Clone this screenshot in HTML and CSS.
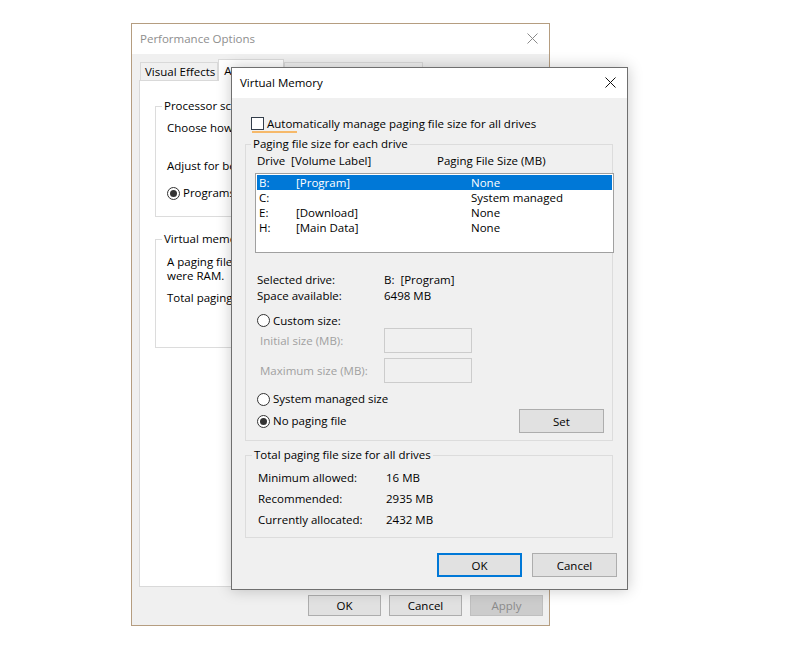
FILE: index.html
```html
<!DOCTYPE html>
<html lang="en">

<head>
    <meta charset="UTF-8">
    <meta name="viewport" content="width=device-width, initial-scale=1.0">
    <title>Virtual Memory</title>
    <link rel="stylesheet" href="styles.css">
</head>

<body>
    <div class="desktop">
        <!-- back window -->
        <div class="window perf">
            <div class="titlebar">
                <span class="title inactive">Performance Options</span>
                <svg class="close" width="11" height="11" viewBox="0 0 11 11">
                    <path d="M0.5 0.5 L10.5 10.5 M10.5 0.5 L0.5 10.5" stroke="#8a8a8a" stroke-width="1" fill="none" />
                </svg>
            </div>
            <div class="perf-body">
                <div class="tabs">
                    <div class="tab">Visual Effects</div>
                    <div class="tab active">Advanced</div>
                    <div class="tab dep">Data Execution Prevention</div>
                </div>
                <div class="tab-panel">
                    <fieldset class="group sched">
                        <legend>Processor scheduling</legend>
                        <p class="line">Choose how to allocate processor resources.</p>
                        <p class="line gap">Adjust for best performance of:</p>
                        <div class="radios">
                            <label class="radio-row"><span class="radio checked"></span>Programs</label>
                            <label class="radio-row"><span class="radio"></span>Background services</label>
                        </div>
                    </fieldset>
                    <fieldset class="group vmem">
                        <legend>Virtual memory</legend>
                        <p class="para">A paging file is an area on the hard disk that Windows uses as if it</p>
                        <p class="para">were RAM.</p>
                        <p class="line">Total paging file size for all drives: &nbsp; 2432 MB</p>
                        <div class="change-row"><button class="btn">Change...</button></div>
                    </fieldset>
                </div>
                <div class="perf-buttons">
                    <button class="btn">OK</button>
                    <button class="btn">Cancel</button>
                    <button class="btn" disabled>Apply</button>
                </div>
            </div>
        </div>

        <!-- front dialog -->
        <div class="window vm">
            <div class="titlebar">
                <span class="title">Virtual Memory</span>
                <svg class="close" width="11" height="11" viewBox="0 0 11 11">
                    <path d="M0.5 0.5 L10.5 10.5 M10.5 0.5 L0.5 10.5" stroke="#111" stroke-width="1" fill="none" />
                </svg>
            </div>
            <div class="vm-body">
                <div class="auto-row">
                    <span class="checkbox"></span>
                    <span>Automatically manage paging file size for all drives</span>
                    <span class="mark"></span>
                </div>

                <fieldset class="group drives">
                    <legend>Paging file size for each drive</legend>
                    <div class="list-head">
                        <span>Drive &nbsp;[Volume Label]</span>
                        <span>Paging File Size (MB)</span>
                    </div>
                    <div class="listbox">
                        <div class="item selected"><span>B:</span><span>[Program]</span><span>None</span></div>
                        <div class="item"><span>C:</span><span></span><span>System managed</span></div>
                        <div class="item"><span>E:</span><span>[Download]</span><span>None</span></div>
                        <div class="item"><span>H:</span><span>[Main Data]</span><span>None</span></div>
                    </div>

                    <div class="info">
                        <span>Selected drive:</span><span>B: &nbsp;[Program]</span>
                        <span>Space available:</span><span>6498 MB</span>
                    </div>

                    <label class="radio-row custom"><span class="radio"></span>Custom size:</label>
                    <div class="size-row first">
                        <span class="disabled-text">Initial size (MB):</span>
                        <input type="text" class="field" disabled>
                    </div>
                    <div class="size-row">
                        <span class="disabled-text">Maximum size (MB):</span>
                        <input type="text" class="field" disabled>
                    </div>
                    <label class="radio-row sys"><span class="radio"></span>System managed size</label>
                    <div class="set-row">
                        <label class="radio-row"><span class="radio checked"></span>No paging file</label>
                        <button class="btn set">Set</button>
                    </div>
                </fieldset>

                <fieldset class="group totals">
                    <legend>Total paging file size for all drives</legend>
                    <div class="total-grid">
                        <span>Minimum allowed:</span><span>16 MB</span>
                        <span>Recommended:</span><span>2935 MB</span>
                        <span>Currently allocated:</span><span>2432 MB</span>
                    </div>
                </fieldset>

                <div class="vm-buttons">
                    <button class="btn big default">OK</button>
                    <button class="btn big">Cancel</button>
                </div>
            </div>
        </div>
    </div>
</body>

</html>
```

FILE: styles.css
```css
* {
    box-sizing: border-box;
}

body {
    margin: 0;
    background-color: #ffffff;
    font-family: "Open Sans", "Noto Sans", sans-serif;
    font-size: 11.5px;
    color: #000;
}

.desktop {
    position: relative;
    width: 791px;
    height: 659px;
    overflow: hidden;
}

p {
    margin: 0;
}

.window {
    position: absolute;
    display: flex;
    flex-direction: column;
    background-color: #f0f0f0;
}

.perf {
    left: 131px;
    top: 23px;
    width: 419px;
    height: 603px;
    border: 1px solid #b59d80;
    z-index: 1;
}

.vm {
    left: 231px;
    top: 67px;
    width: 397px;
    height: 523px;
    border: 1px solid #6f6f6f;
    box-shadow: 0 0 14px rgba(0, 0, 0, 0.22);
    z-index: 2;
}

.titlebar {
    height: 30px;
    flex: none;
    background-color: #fff;
    display: flex;
    align-items: center;
    justify-content: space-between;
    padding: 0 11px 1px 8px;
}

.title {
    line-height: 16px;
}

.title.inactive {
    color: #8e8e8e;
}

/* buttons */
.btn {
    font-family: inherit;
    font-size: 11.5px;
    color: #000;
    background-color: #e1e1e1;
    border: 1px solid #adadad;
    padding: 0;
    height: 21px;
    width: 73px;
    cursor: pointer;
}

.btn:disabled {
    background-color: #cccccc;
    border-color: #bfbfbf;
    color: #8a8a8a;
}

.btn.big {
    height: 24px;
    width: 85px;
}

.btn.default {
    border: 2px solid #0078d7;
}

/* radios and checkbox */
.radio-row {
    display: flex;
    align-items: center;
    height: 16px;
    line-height: 16px;
}

.radio {
    width: 13px;
    height: 13px;
    border: 1px solid #333;
    border-radius: 50%;
    background-color: #fff;
    margin-right: 3px;
    position: relative;
    flex: none;
}

.radio.checked::after {
    content: "";
    position: absolute;
    left: 2px;
    top: 2px;
    width: 7px;
    height: 7px;
    border-radius: 50%;
    background-color: #333;
}

.checkbox {
    width: 13px;
    height: 13px;
    border: 1px solid #333d4a;
    background-color: #fff;
    margin-right: 3px;
    flex: none;
}

/* group boxes */
.group {
    margin: 0;
    border: 1px solid #dcdcdc;
    min-width: 0;
}

.group legend {
    padding: 0 2px;
    line-height: 16px;
}

/* performance options */
.perf-body {
    flex: 1;
    display: flex;
    flex-direction: column;
    padding: 5px 7px 0 7px;
}

.tabs {
    display: flex;
    align-items: flex-end;
    height: 21px;
    padding-left: 1px;
    position: relative;
    z-index: 1;
}

.tab {
    height: 18px;
    line-height: 17px;
    padding: 0 2px 0 4px;
    border: 1px solid #d9d9d9;
    border-bottom: none;
    background-color: #f0f0f0;
    white-space: nowrap;
}

.tab.active {
    height: 22px;
    margin-bottom: -1px;
    background-color: #fff;
    padding: 2px 6px 0 5px;
}

.tab.dep {
    font-size: 11px;
    padding: 0 1px;
}

.tab-panel {
    height: 507px;
    background-color: #fff;
    border: 1px solid #d9d9d9;
    padding: 17px 15px 0 15px;
}

.sched {
    padding: 6px 10px 15px 11px;
}

.sched legend,
.vmem legend {
    margin-left: -5px;
}

.line {
    line-height: 16px;
}

.line.gap {
    margin-top: 22px;
}

.radios {
    display: flex;
    gap: 40px;
    margin-top: 11px;
}

.vmem {
    margin-top: 14px;
    padding: 8px 10px 12px 11px;
}

.para {
    line-height: 14px;
    white-space: nowrap;
}

.vmem .line {
    margin-top: 7px;
}

.change-row {
    display: flex;
    justify-content: flex-end;
    margin-top: 6px;
}

.change-row .btn {
    width: 75px;
    height: 23px;
}

.perf-buttons {
    display: flex;
    justify-content: flex-end;
    gap: 8px;
    margin-top: 8px;
    margin-right: -1px;
}

/* virtual memory dialog */
.vm-body {
    flex: 1;
    padding: 0 14px 0 13px;
}

.auto-row {
    position: relative;
    display: flex;
    align-items: center;
    height: 16px;
    margin-top: 17px;
    padding-left: 6px;
}

.mark {
    position: absolute;
    left: 7px;
    top: 16px;
    width: 45px;
    height: 2px;
    background-color: #f6b96a;
}

.drives {
    margin-top: 5px;
    padding: 1px 8px 7px 11px;
}

.drives legend,
.totals legend {
    margin-left: -6px;
}

.list-head {
    display: grid;
    grid-template-columns: 180px 1fr;
    line-height: 16px;
}

.listbox {
    margin: 4px -10px 0 -2px;
    height: 80px;
    border: 1px solid #a0a0a0;
    background-color: #fff;
    padding: 1px;
}

.item {
    display: grid;
    grid-template-columns: 37px 175px 1fr;
    height: 15px;
    line-height: 15px;
    padding-left: 2px;
    white-space: nowrap;
}

.item.selected {
    background-color: #0078d7;
    color: #fff;
}

.info {
    display: grid;
    grid-template-columns: 127px 1fr;
    grid-auto-rows: 16px;
    line-height: 16px;
    margin-top: 19px;
}

.custom {
    margin-top: 9px;
    height: 15px;
    line-height: 15px;
}

.size-row {
    display: grid;
    grid-template-columns: 127px 88px;
    align-items: center;
    height: 25px;
    margin-top: 5px;
}

.size-row.first {
    margin-top: 0;
}

.disabled-text {
    color: #a0a0a0;
    padding-left: 3px;
}

.field {
    width: 88px;
    height: 25px;
    border: 1px solid #cccccc;
    background-color: #f0f0f0;
}

.sys {
    margin-top: 8px;
}

.set-row {
    display: flex;
    justify-content: space-between;
    align-items: center;
    height: 24px;
    margin-top: 2px;
}

.btn.set {
    width: 85px;
    height: 24px;
}

.totals {
    margin-top: 6px;
    padding: 4px 8px 7px 12px;
}

.total-grid {
    display: grid;
    grid-template-columns: 128px 1fr;
    grid-auto-rows: 21px;
    align-items: center;
}

.vm-buttons {
    display: flex;
    justify-content: flex-end;
    gap: 10px;
    margin-top: 15px;
    margin-right: -4px;
}
```
